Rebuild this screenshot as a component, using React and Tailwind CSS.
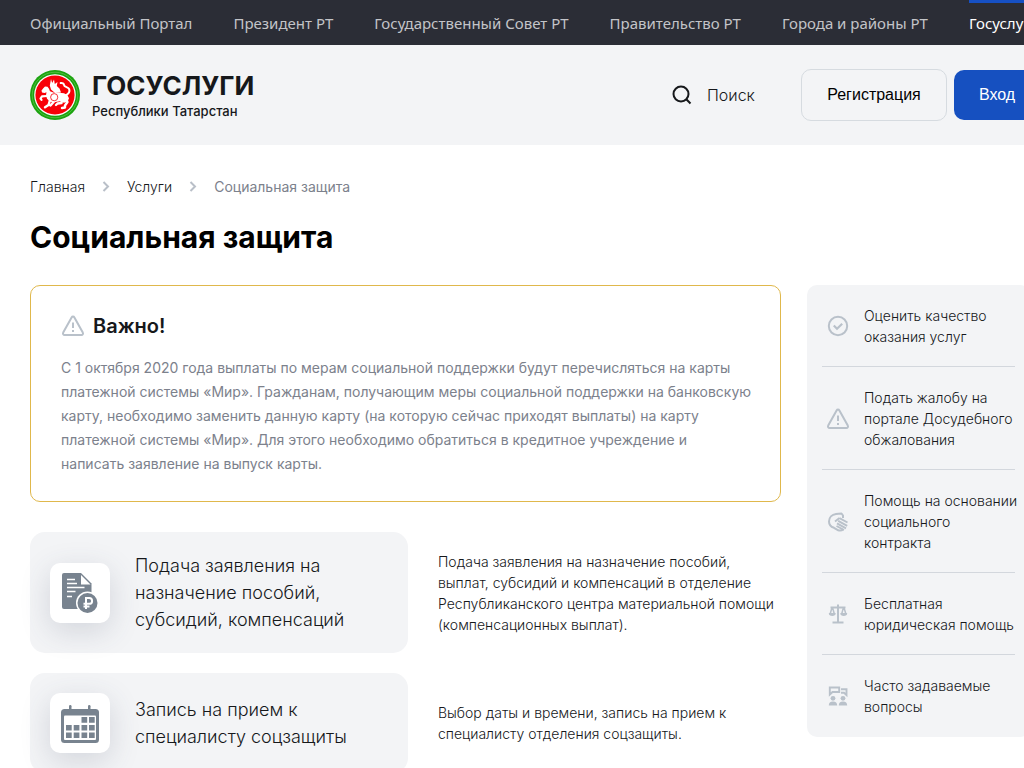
import React, { useState } from "react";

const topLinks = [
  "Официальный Портал",
  "Президент РТ",
  "Государственный Совет РТ",
  "Правительство РТ",
  "Города и районы РТ",
];

const Emblem = () => (
  <svg viewBox="0 0 50 50" className="size-[50px] shrink-0" aria-hidden="true">
    <circle cx="25" cy="25" r="25" fill="#1ba30f" />
    <circle cx="25" cy="25" r="22.8" fill="none" stroke="#5cc04a" strokeWidth="0.8" />
    <circle cx="25" cy="25" r="20.8" fill="#fff" />
    <circle cx="25" cy="25" r="19.6" fill="#f80008" />
    {/* body and head */}
    <path
      d="M11.500 20.500l2-2.500 1.500-1.500 2.500.3 1.500 2 1 2.500 4 1.500 5 0 5 .5 3.500 2 1.500 3-1.500 3.500-3.500 1-4-1.500-6 1-4-.5-3-3-1-3.500.5-3-2 .700-2.500-.5z"
      fill="#fff"
    />
    {/* wing */}
    <path d="M21 9l1.200 4L24 9.500l.8 4.500 2.700-2-.7 4 2.700 2.500 1.500 4-6 .5-4-3.500-1.200-4z" fill="#fff" />
    <g fill="none" stroke="#fff" strokeLinecap="round" strokeLinejoin="round">
      <path d="M17 26l-5 .3-1.500 2.200 1 1.300" strokeWidth="2.2" />
      <path d="M20 30l-1.500 5-3.500 2.300M24 31.500l-3.500 4" strokeWidth="2.4" />
      <path d="M35.500 28l2 4-2.500 3.500 0 2-3 .5M32 29l-.5 4-4 .500-1.500 1.500" strokeWidth="2.4" />
      <path d="M35.500 25.500c3-1.500 4.500-4 3.700-6.300-.8-2.400-5-1.800-5.200-4.200-.1-1.500-1.500-2.300-3.300-2" strokeWidth="2" />
    </g>
    <circle cx="24.200" cy="27.200" r="3.600" fill="#fff" stroke="#f80008" strokeWidth="0.8" />
  </svg>
);

const Chevron = () => (
  <svg viewBox="0 0 8 12" className="h-3 w-2" fill="none" stroke="#b9bfc8" strokeWidth="2" aria-hidden="true">
    <path d="M1.500 1L6 5.500 1.500 10" />
  </svg>
);

const WarningIcon = () => (
  <svg viewBox="0 0 24 24" className="size-6 shrink-0" fill="none" stroke="#b9c1ca" strokeWidth="2" strokeLinejoin="round" aria-hidden="true">
    <path d="M10.600 3.400L2.200 18.600c-.6 1.200.1 2.400 1.400 2.400h16.800c1.300 0 2-1.200 1.400-2.400L13.400 3.400c-.6-1.100-2.200-1.100-2.800 0z" />
    <path d="M12 8.500v5.500M12 16v2" />
  </svg>
);

const CheckIcon = () => (
  <svg viewBox="0 0 24 24" className="size-6 shrink-0" fill="none" stroke="#b9c1ca" strokeWidth="2" aria-hidden="true">
    <circle cx="12" cy="12" r="9.200" />
    <path d="M7.800 11.500l3.200 3.200 5.200-5" strokeWidth="2.2" />
  </svg>
);

const HandsIcon = () => (
  <svg viewBox="0 0 24 24" className="size-6 shrink-0" fill="none" stroke="#b9c1ca" strokeLinejoin="round" aria-hidden="true">
    <path
      d="M17 8V5.500l-1.500-2-5.500.5C6 4.500 3 7.500 3 11.500c0 3 1.800 5.300 5 6.300l4.300 2.500c2 .7 3.500.3 5-1"
      strokeWidth="2"
    />
    <path d="M9 11.500l4.500-3.500M13.500 8.200l8 4.300M12.200 10.800l9 5M11 13.300l9 5M10.500 16l7.500 4" strokeWidth="1.900" />
  </svg>
);

const ScalesIcon = () => (
  <svg viewBox="0 0 24 24" className="size-6 shrink-0" fill="none" stroke="#b9c1ca" strokeWidth="2" aria-hidden="true">
    <path d="M12 2.500v18M6.500 20.500h11M4.500 5.500h15" />
    <path d="M6 5.500l-2 7M6.500 5.500l2 7M17.500 5.500l-2 7M18 5.500l2 7" strokeWidth="1.500" />
    <path
      d="M2.800 11h6.900c0 2.200-1.300 3-3.400 3s-3.500-.8-3.500-3zM14.300 11h6.900c0 2.200-1.400 3-3.500 3s-3.400-.8-3.400-3z"
      fill="#b9c1ca"
      stroke="none"
    />
  </svg>
);

const PeopleIcon = () => (
  <svg viewBox="0 0 24 24" className="size-6 shrink-0" fill="none" stroke="#b9c1ca" strokeWidth="1.900" aria-hidden="true">
    <path d="M3.800 10.500V3.500h9.400V8H6.500l-2.700 2.500zM15 5.200h5.500v5.800l-2.500-2.300h-3" />
    <g fill="#b9c1ca" stroke="none">
      <circle cx="7" cy="14.300" r="2.400" />
      <circle cx="17" cy="14.300" r="2.400" />
      <path d="M2.800 21.500c0-2.800 1.400-4 4.200-4s4.200 1.200 4.200 4zM12.800 21.500c0-2.800 1.400-4 4.200-4s4.200 1.200 4.200 4z" />
    </g>
  </svg>
);

const DocumentIcon = () => (
  <svg viewBox="0 0 40 40" className="size-10" aria-hidden="true">
    <path d="M4 0h17l10.500 10.500V36H4a2 2 0 0 1-2-2V2a2 2 0 0 1 2-2z" fill="#78838f" />
    <path d="M21 2v9.500h9.500z" fill="#fff" />
    <path d="M7 6.500h8M7 10.500h10M7 14.500h17.500M7 18.500h8.500M7 23.500h5" stroke="#fff" strokeWidth="1.600" />
    <circle cx="27.500" cy="30" r="11.500" fill="#fff" />
    <circle cx="27.500" cy="30" r="10" fill="#78838f" />
    <path d="M26 36V25h3.200a2.900 2.900 0 0 1 0 5.800H23.500M23.500 33.500h6" fill="none" stroke="#fff" strokeWidth="2" />
  </svg>
);

const CalendarIcon = () => (
  <svg viewBox="0 0 40 40" className="size-10" fill="#78838f" aria-hidden="true">
    <rect x="9" y="2" width="2.500" height="6" rx="1.200" />
    <rect x="28" y="2" width="2.500" height="6" rx="1.200" />
    <rect x="1" y="6" width="38" height="34" rx="3.500" />
    <rect x="4" y="12.500" width="32" height="24.500" rx="1" fill="#fff" />
    <path d="M21.500 14h5.700v5.700h-5.700zM29 14h5.700v5.700H29zM6 22h5.700v5.500H6zM13.700 22h5.700v5.500h-5.700zM21.500 22h5.700v5.500h-5.700zM29 22h5.700v5.500H29zM6 29.500h5.700V35H6zM13.700 29.500h5.700V35h-5.700zM21.500 29.500h5.700V35h-5.700zM29 29.500h5.700V35H29z" />
  </svg>
);

const services = [
  {
    title: "Подача заявления на назначение пособий, субсидий, компенсаций",
    text: "Подача заявления на назначение пособий, выплат, субсидий и компенсаций в отделение Республиканского центра материальной помощи (компенсационных выплат).",
    icon: <DocumentIcon />,
  },
  {
    title: "Запись на прием к специалисту соцзащиты",
    text: "Выбор даты и времени, запись на прием к специалисту отделения соцзащиты.",
    icon: <CalendarIcon />,
  },
];

const sideLinks = [
  { title: "Оценить качество оказания услуг", icon: <CheckIcon /> },
  { title: "Подать жалобу на портале Досудебного обжалования", icon: <WarningIcon /> },
  { title: "Помощь на основании социального контракта", icon: <HandsIcon /> },
  { title: "Бесплатная юридическая помощь", icon: <ScalesIcon /> },
  { title: "Часто задаваемые вопросы", icon: <PeopleIcon /> },
];

const TopBar = () => (
  <nav className="flex h-[45px] gap-[41px] bg-[#2b2d36] px-[30px] font-['Noto_Sans',sans-serif] text-[15px] leading-[47px] whitespace-nowrap text-[#c3c4c8]">
    {topLinks.map((link) => (
      <a key={link} href="#">
        {link}
      </a>
    ))}
    <a href="#" className="border-t-3 border-[#1650c4] leading-[40px] text-white">
      Госуслуги
    </a>
  </nav>
);

const Header = () => {
  const [query, setQuery] = useState("");

  return (
    <header className="flex h-[100px] items-center justify-between bg-[#f3f4f6] pr-5 pl-[30px]">
      <a href="#" className="flex items-center gap-3 text-[#16181b]">
        <Emblem />
        <span>
          <span className="block text-[26px] leading-8 font-bold">ГОСУСЛУГИ</span>
          <span className="block text-[13px] leading-[18px] font-medium">Республики Татарстан</span>
        </span>
      </a>
      <div className="flex items-center">
        <label className="flex items-center gap-[13px]">
          <svg viewBox="0 0 24 24" className="size-6" fill="none" stroke="#16181b" strokeWidth="2" aria-hidden="true">
            <circle cx="11" cy="11" r="7.500" />
            <path d="M16.300 16.300l4.200 4.200" />
          </svg>
          <input
            type="text"
            aria-label="Поиск"
            placeholder="Поиск"
            value={query}
            onChange={(e) => setQuery(e.target.value)}
            className="w-[94px] bg-transparent text-[16px] font-light outline-none placeholder:text-[#16181b]"
          />
        </label>
        <button className="h-[52px] w-[146px] rounded-[10px] border border-[#d6dbe0] font-['Liberation_Sans',sans-serif] text-[16px] text-black">
          Регистрация
        </button>
        <button className="ml-[7px] h-[50px] w-[86px] rounded-[10px] bg-[#1650c0] font-['Liberation_Sans',sans-serif] text-[16px] text-white">
          Вход
        </button>
      </div>
    </header>
  );
};

const Notice = () => (
  <section className="rounded-[10px] border border-[#e0b84c] py-[25px] pr-[26px] pl-[30px]">
    <h2 className="flex items-center gap-2 text-[20px] leading-[30px] font-semibold">
      <WarningIcon />
      Важно!
    </h2>
    <p className="mt-[15px] text-[14px] leading-6 text-[#7c818c]">
      С 1 октября 2020 года выплаты по мерам социальной поддержки будут перечисляться на карты платежной системы «Мир».
      Гражданам, получающим меры социальной поддержки на банковскую карту, необходимо заменить данную карту (на которую
      сейчас приходят выплаты) на карту платежной системы «Мир». Для этого необходимо обратиться в кредитное учреждение и
      написать заявление на выпуск карты.
    </p>
  </section>
);

const Sidebar = () => (
  <aside className="w-[223px] shrink-0 rounded-[10px] bg-[#f3f4f6] px-[15px]">
    <ul>
      {sideLinks.map(({ title, icon }) => (
        <li key={title} className="border-b border-[#d3d7dd] last:border-none last:pb-px">
          <a href="#" className="flex items-center gap-[14px] pt-5 pb-[19px] pl-1">
            {icon}
            <span className="w-[156px] shrink-0 text-[14px] leading-[21px] font-light">{title}</span>
          </a>
        </li>
      ))}
    </ul>
  </aside>
);

export default function App() {
  return (
    <div className="overflow-x-hidden bg-white font-['Inter',sans-serif] text-[#16181b]">
      <div className="min-w-[1060px]">
        <TopBar />
        <Header />
        <main className="px-[30px] pt-8 pb-10">
          <nav className="flex items-center gap-[17px] text-[14px] leading-5 font-light">
            <a href="#">Главная</a>
            <Chevron />
            <a href="#">Услуги</a>
            <Chevron />
            <span className="font-normal text-[#7c818c]">Социальная защита</span>
          </nav>
          <h1 className="mt-5 text-[30px] leading-[40px] font-bold text-black">Социальная защита</h1>

          <div className="mt-7 flex items-start gap-[26px]">
            <div className="min-w-0 flex-1">
              <Notice />
              <div className="mt-[30px] flex flex-col gap-5">
                {services.map(({ title, text, icon }) => (
                  <div key={title} className="flex items-center gap-[30px]">
                    <a href="#" className="flex w-[378px] shrink-0 items-center gap-[25px] rounded-[15px] bg-[#f3f4f6] p-5">
                      <span className="flex size-[60px] shrink-0 items-center justify-center rounded-[10px] bg-white shadow-[0_8px_30px_rgba(60,70,100,0.18)]">
                        {icon}
                      </span>
                      <span className="text-[18px] leading-[27px] font-light">{title}</span>
                    </a>
                    <p className="text-[14px] leading-[21px] font-light">{text}</p>
                  </div>
                ))}
              </div>
            </div>
            <Sidebar />
          </div>
        </main>
      </div>
    </div>
  );
}
